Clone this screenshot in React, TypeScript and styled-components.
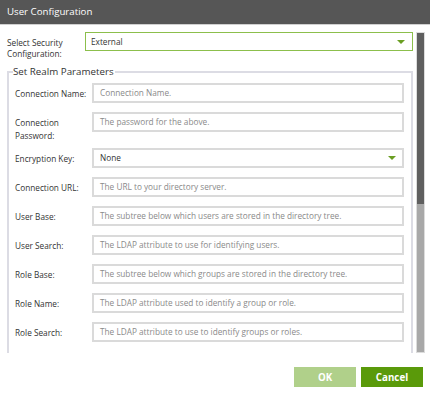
import React from "react";
import styled, { createGlobalStyle } from "styled-components";

const Global = createGlobalStyle`
  html, body { margin: 0; padding: 0; background: #fff; }
  body { font-family: "Open Sans", "Noto Sans", sans-serif; }
  * { box-sizing: border-box; }
`;

const Dialog = styled.div`
  width: 430px;
  height: 393px;
  display: flex;
  flex-direction: column;
  background: #fff;
  overflow: hidden;
`;

const TitleBar = styled.div`
  height: 25px;
  flex: none;
  background: #565656;
  border-bottom: 1px solid #d0d0d0;
  color: #fff;
  font-size: 9.7px;
  line-height: 23px;
  padding-left: 7px;
`;

const Body = styled.div`
  height: 328px;
  flex: none;
  display: flex;
`;

const Content = styled.div`
  flex: 1;
  overflow: hidden;
  padding: 7px 0 0 7px;
  display: flex;
  flex-direction: column;
`;

const Track = styled.div`
  width: 9px;
  margin: 7px 5px 0 3px;
  display: flex;
  flex-direction: column;
  border: 1px solid #dcdcdc;
  background: #a8a8a8;
`;

const Thumb = styled.div`
  height: 171px;
  background: #5f5f5f;
`;

const TopRow = styled.div`
  display: flex;
  align-items: flex-start;
  width: 406px;
`;

const TopLabel = styled.div`
  width: 78px;
  flex: none;
  font-size: 8.25px;
  line-height: 10.5px;
  color: #333;
  padding-top: 6px;
`;

const SelectBox = styled.div`
  flex: 1;
  height: 19px;
  border: 1.5px solid #8cbf4c;
  display: flex;
  align-items: center;
  justify-content: space-between;
  padding: 0 7px 0 5px;
  font-size: 8.25px;
  color: #333;
`;

const Caret = styled.span`
  width: 0;
  height: 0;
  border-left: 4.5px solid transparent;
  border-right: 4.5px solid transparent;
  border-top: 4.5px solid #6a9e22;
`;

const Fieldset = styled.fieldset`
  margin: 6px 0 0 0;
  width: 406px;
  border: 2px solid #dcdce4;
  padding: 5px 7px 20px 6px;
  display: flex;
  flex-direction: column;
  gap: 9.5px;
`;

const Legend = styled.legend`
  font-size: 9.75px;
  color: #333;
  padding: 0 1px 0 0;
  margin-left: -2px;
  line-height: 13px;
`;

const Row = styled.div<{ $tall?: boolean }>`
  display: flex;
  align-items: flex-start;
  height: ${(p) => (p.$tall ? 26.5 : 19.5)}px;
`;

const Label = styled.div`
  width: 77px;
  flex: none;
  font-size: 8.25px;
  line-height: 13px;
  color: #333;
  padding: 3.5px 4px 0 0;
`;

const Input = styled.div<{ $value?: boolean }>`
  flex: 1;
  height: 20px;
  border: 2px solid #dadada;
  font-size: 8.25px;
  line-height: 16px;
  padding-left: 6px;
  color: ${(p) => (p.$value ? "#333" : "#8a8a8a")};
  display: flex;
  align-items: center;
  justify-content: space-between;
  padding-right: 6px;
`;

const Footer = styled.div`
  flex: 1;
  display: flex;
  justify-content: flex-end;
  align-items: flex-start;
  gap: 5px;
  padding: 14px 7px 0 0;
`;

const Button = styled.div<{ $primary?: boolean }>`
  width: 62px;
  height: 20px;
  background: ${(p) => (p.$primary ? "#5a9a0a" : "#b0d08a")};
  color: #fff;
  font-weight: 700;
  font-size: 9.75px;
  display: flex;
  align-items: center;
  justify-content: center;
`;

const rows: { label: string; text: string; value?: boolean; select?: boolean; tall?: boolean }[] = [
  { label: "Connection Name:", text: "Connection Name." },
  { label: "Connection Password:", text: "The password for the above.", tall: true },
  { label: "Encryption Key:", text: "None", value: true, select: true },
  { label: "Connection URL:", text: "The URL to your directory server." },
  { label: "User Base:", text: "The subtree below which users are stored in the directory tree." },
  { label: "User Search:", text: "The LDAP attribute to use for identifying users." },
  { label: "Role Base:", text: "The subtree below which groups are stored in the directory tree." },
  { label: "Role Name:", text: "The LDAP attribute used to identify a group or role." },
  { label: "Role Search:", text: "The LDAP attribute to use to identify groups or roles." },
];

export default function App() {
  return (
    <Dialog>
      <Global />
      <TitleBar>User Configuration</TitleBar>
      <Body>
        <Content>
          <TopRow>
            <TopLabel>Select Security Configuration:</TopLabel>
            <SelectBox>
              External
              <Caret />
            </SelectBox>
          </TopRow>
          <Fieldset>
            <Legend>Set Realm Parameters</Legend>
            {rows.map((r) => (
              <Row key={r.label} $tall={r.tall}>
                <Label>{r.label}</Label>
                <Input $value={r.value}>
                  {r.text}
                  {r.select && <Caret />}
                </Input>
              </Row>
            ))}
          </Fieldset>
        </Content>
        <Track>
          <Thumb />
        </Track>
      </Body>
      <Footer>
        <Button>OK</Button>
        <Button $primary>Cancel</Button>
      </Footer>
    </Dialog>
  );
}
